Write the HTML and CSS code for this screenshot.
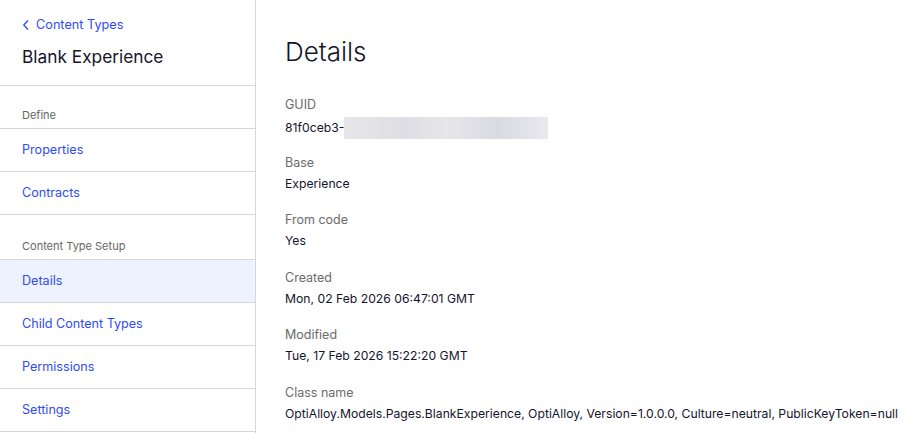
FILE: index.html
```html
<!DOCTYPE html>
<html lang="en">

<head>
  <meta charset="UTF-8">
  <meta name="viewport" content="width=device-width, initial-scale=1.0">
  <title>Blank Experience - Details</title>
  <link rel="stylesheet" href="styles.css">
</head>

<body>
  <div class="layout">
    <!-- Left navigation -->
    <aside class="sidebar">
      <div class="sidebar-head">
        <a class="back-link" href="#">
          <svg width="8" height="12" viewBox="0 0 8 12"><path d="M6 1.5 L1.8 6 L6 10.5" fill="none" stroke="currentColor" stroke-width="1.3"/></svg>
          Content Types
        </a>
        <h1>Blank Experience</h1>
      </div>

      <div class="nav-group">Define</div>
      <a class="nav-item" href="#">Properties</a>
      <a class="nav-item" href="#">Contracts</a>

      <div class="nav-group tall">Content Type Setup</div>
      <a class="nav-item active" href="#">Details</a>
      <a class="nav-item" href="#">Child Content Types</a>
      <a class="nav-item" href="#">Permissions</a>
      <a class="nav-item" href="#">Settings</a>
    </aside>

    <!-- Details panel -->
    <main class="content">
      <h2>Details</h2>
      <dl class="details">
        <div class="field">
          <dt>GUID</dt>
          <dd>81f0ceb3-<span class="blurred"></span></dd>
        </div>
        <div class="field">
          <dt>Base</dt>
          <dd>Experience</dd>
        </div>
        <div class="field">
          <dt>From code</dt>
          <dd>Yes</dd>
        </div>
        <div class="field">
          <dt>Created</dt>
          <dd>Mon, 02 Feb 2026 06:47:01 GMT</dd>
        </div>
        <div class="field">
          <dt>Modified</dt>
          <dd>Tue, 17 Feb 2026 15:22:20 GMT</dd>
        </div>
        <div class="field">
          <dt>Class name</dt>
          <dd>OptiAlloy.Models.Pages.BlankExperience, OptiAlloy, Version=1.0.0.0, Culture=neutral, PublicKeyToken=null</dd>
        </div>
      </dl>
    </main>
  </div>
</body>

</html>
```

FILE: styles.css
```css
body {
  margin: 0;
  padding: 0;
  background-color: white;
  color: #14142b;
  font-family: Inter, "Noto Sans", sans-serif;
  overflow: hidden;
}

a {
  text-decoration: none;
}

.layout {
  display: flex;
  height: 433px;
}

.sidebar {
  width: 255px;
  flex-shrink: 0;
  border-right: 1px solid #d6d6d6;
  display: flex;
  flex-direction: column;
}

.sidebar-head {
  height: 86px;
  padding: 16px 22px 0;
  box-sizing: border-box;
  border-bottom: 1px solid #d6d6d6;
}

.back-link {
  display: flex;
  align-items: center;
  gap: 6px;
  color: #2d4cf5;
  font-size: 12.7px;
  line-height: 18px;
}

.sidebar-head h1 {
  margin: 11px 0 0;
  font-size: 17.3px;
  font-weight: 400;
  line-height: 24px;
  color: #14142b;
}

.nav-group {
  height: 43px;
  padding: 0 22px 6px;
  box-sizing: border-box;
  display: flex;
  align-items: flex-end;
  font-size: 11px;
  color: #666;
  border-bottom: 1px solid #d6d6d6;
}

.nav-group.tall {
  height: 45px;
}

.nav-item {
  height: 43px;
  padding: 0 22px 1px;
  box-sizing: border-box;
  display: flex;
  align-items: center;
  font-size: 12.6px;
  color: #2d4cf5;
  border-bottom: 1px solid #d6d6d6;
}

.nav-item.active {
  background-color: #eef1fe;
}

.content {
  flex: 1;
  padding: 34px 0 0 29px;
}

.content h2 {
  margin: 0 0 26px;
  font-size: 26px;
  font-weight: 300;
  line-height: 36px;
  color: #14142b;
}

.details {
  margin: 0;
}

.field {
  height: 57.6px;
}

.field dt {
  font-size: 12.5px;
  line-height: 18px;
  color: #6b6b6b;
}

.field dd {
  margin: 3px 0 0;
  font-size: 12.2px;
  line-height: 18px;
  color: #14142b;
  display: flex;
  align-items: center;
  white-space: nowrap;
}

.blurred {
  display: inline-block;
  width: 204px;
  height: 22px;
  background: linear-gradient(90deg, #e6e6ea, #dedee4 30%, #e6e6ea 50%, #dadae2 75%, #e8e8ee);
}
```
